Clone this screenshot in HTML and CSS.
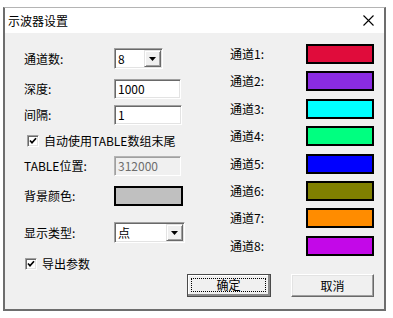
FILE: index.html
```html
<!doctype html>
<html lang="zh-CN">
<head>
    <meta charset="UTF-8">
    <meta name="viewport" content="width=device-width, initial-scale=1.0">
    <title>示波器设置</title>
    <link rel="stylesheet" href="styles.css">
</head>
<body>
    <div class="dialog">
        <!-- Title bar -->
        <div class="titlebar">
            <span class="title">示波器设置</span>
            <svg class="close" width="11" height="11" viewBox="0 0 11 11">
                <path d="M0.5 0.5 L10.5 10.5 M10.5 0.5 L0.5 10.5" stroke="#000" stroke-width="1.1" fill="none"/>
            </svg>
        </div>

        <div class="client">
            <!-- Left side: general settings -->
            <div class="left">
                <div class="row r1">
                    <span class="label">通道数:</span>
                    <div class="combo combo-small">
                        <span>8</span>
                        <span class="drop"><svg width="7" height="4" viewBox="0 0 7 4"><path d="M0 0 H7 L3.5 4 Z" fill="#000"/></svg></span>
                    </div>
                </div>
                <div class="row r2">
                    <span class="label">深度:</span>
                    <div class="input">1000</div>
                </div>
                <div class="row r3">
                    <span class="label">间隔:</span>
                    <div class="input input-wide">1</div>
                </div>
                <div class="row r4 check check-auto">
                    <span class="box"><svg width="8" height="8" viewBox="0 0 8 8"><path d="M1 3.5 L3 5.8 L7 1.2" stroke="#000" stroke-width="1.7" fill="none"/></svg></span>
                    <span>自动使用TABLE数组末尾</span>
                </div>
                <div class="row r5">
                    <span class="label">TABLE位置:</span>
                    <div class="input disabled">312000</div>
                </div>
                <div class="row r6">
                    <span class="label">背景颜色:</span>
                    <div class="swatch bg-swatch"></div>
                </div>
                <div class="row r7">
                    <span class="label">显示类型:</span>
                    <div class="combo combo-wide">
                        <span>点</span>
                        <span class="drop"><svg width="7" height="4" viewBox="0 0 7 4"><path d="M0 0 H7 L3.5 4 Z" fill="#000"/></svg></span>
                    </div>
                </div>
                <div class="row r8 check">
                    <span class="box"><svg width="8" height="8" viewBox="0 0 8 8"><path d="M1 3.5 L3 5.8 L7 1.2" stroke="#000" stroke-width="1.7" fill="none"/></svg></span>
                    <span>导出参数</span>
                </div>
            </div>

            <!-- Right side: channel colours and buttons -->
            <div class="right">
                <div class="channels">
                    <div class="channel"><span class="ch-label">通道1:</span><span class="swatch c1"></span></div>
                    <div class="channel"><span class="ch-label">通道2:</span><span class="swatch c2"></span></div>
                    <div class="channel"><span class="ch-label">通道3:</span><span class="swatch c3"></span></div>
                    <div class="channel"><span class="ch-label">通道4:</span><span class="swatch c4"></span></div>
                    <div class="channel"><span class="ch-label">通道5:</span><span class="swatch c5"></span></div>
                    <div class="channel"><span class="ch-label">通道6:</span><span class="swatch c6"></span></div>
                    <div class="channel"><span class="ch-label">通道7:</span><span class="swatch c7"></span></div>
                    <div class="channel"><span class="ch-label">通道8:</span><span class="swatch c8"></span></div>
                </div>
                <div class="buttons">
                    <button class="btn btn-default"><span class="focus">确定</span></button>
                    <button class="btn btn-cancel">取消</button>
                </div>
            </div>
        </div>
    </div>
</body>
</html>
```

FILE: styles.css
```css
* {
    margin: 0;
    padding: 0;
    box-sizing: border-box;
}

body {
    background-color: #fff;
    font-family: "Noto Sans CJK SC", sans-serif;
    font-size: 12px;
    line-height: 1;
    color: #000;
}

/* Window frame */
.dialog {
    width: 383px;
    height: 304px;
    margin: 7px 0 0 3px;
    border: 2px solid #6d6d6d;
    border-top: 1px solid #b4b4b4;
    box-shadow: 0 1px 0 #a8a8a8;
    background-color: #f0f0f0;
    display: flex;
    flex-direction: column;
}

.titlebar {
    height: 25px;
    background-color: #fff;
    display: flex;
    align-items: center;
    justify-content: space-between;
    padding: 0 10px 0 3px;
}

.close {
    display: block;
}

/* Client area */
.client {
    flex: 1;
    display: flex;
    justify-content: space-between;
    padding: 0 10px 0 19px;
}

.left {
    width: 162px;
    padding-top: 15px;
}

.row {
    display: flex;
    align-items: center;
}

.r2 { margin-top: 10px; }
.r3 { margin-top: 6px; }
.r4 { margin-top: 8px; height: 16px; }
.r5 { margin-top: 7px; }
.r6 { margin-top: 10px; }
.r7 { margin-top: 16px; }
.r8 { margin-top: 13px; height: 16px; }

.label {
    width: 90px;
}

/* Sunken edit fields */
.input,
.combo,
.box {
    background-color: #fff;
    border: 1px solid;
    border-color: #a0a0a0 #fff #fff #a0a0a0;
    box-shadow: inset 1px 1px 0 #696969, inset -1px -1px 0 #e3e3e3;
}

.input {
    width: 67px;
    height: 20px;
    padding-left: 3px;
    display: flex;
    align-items: center;
}

.input-wide {
    width: 68px;
}

.input.disabled {
    background-color: #f0f0f0;
    color: #6d6d6d;
    border-color: #b4b4b4 #fff #fff #b4b4b4;
    box-shadow: inset 1px 1px 0 #a0a0a0;
}

/* Combo boxes */
.combo {
    height: 21px;
    display: flex;
    align-items: center;
    justify-content: space-between;
    padding: 0 1px 0 3px;
}

.combo-small {
    width: 49px;
}

.combo-wide {
    width: 71px;
}

.drop {
    width: 17px;
    height: 17px;
    background-color: #f0f0f0;
    border: 1px solid;
    border-color: #e3e3e3 #696969 #696969 #e3e3e3;
    box-shadow: inset 1px 1px 0 #fff, inset -1px -1px 0 #a0a0a0;
    display: flex;
    align-items: center;
    justify-content: center;
}

.drop svg {
    display: block;
}

/* Check boxes */
.check {
    gap: 5px;
    padding-left: 1px;
}

.check-auto {
    padding-left: 3px;
}

.box {
    width: 12px;
    height: 12px;
    display: flex;
    align-items: center;
    justify-content: center;
}

.box svg {
    display: block;
}

/* Colour swatches */
.swatch {
    display: block;
    width: 68px;
    height: 20px;
    border: 2px solid #000;
}

.bg-swatch {
    width: 69px;
    background-color: #c0c0c0;
}

.c1 { background-color: #e00c3b; }
.c2 { background-color: #8a2be2; }
.c3 { background-color: #00ffff; }
.c4 { background-color: #00ff80; }
.c5 { background-color: #0000ff; }
.c6 { background-color: #808000; }
.c7 { background-color: #ff8c00; }
.c8 { background-color: #c308e8; }

/* Right column */
.right {
    padding-top: 11px;
    display: flex;
    flex-direction: column;
    align-items: flex-end;
}

.channels {
    display: flex;
    flex-direction: column;
    gap: 7.4px;
}

.channel {
    display: flex;
    align-items: center;
    height: 20px;
}

.ch-label {
    width: 76px;
}

/* Push buttons */
.buttons {
    display: flex;
    gap: 20px;
    margin-top: 18px;
}

.btn {
    width: 83px;
    height: 23px;
    font-family: inherit;
    font-size: 12px;
    color: #000;
    background-color: #f0f0f0;
    border: 1px solid;
    border-color: #fff #696969 #696969 #fff;
    box-shadow: inset -1px -1px 0 #a0a0a0, inset 1px 1px 0 #e3e3e3;
    display: flex;
    align-items: center;
    justify-content: center;
}

.btn-default {
    width: 84px;
    border: 1px solid #4a4a4a;
    box-shadow: inset -2px -2px 0 #8a8a8a, inset 1px 1px 0 #fff;
    padding: 3px 4px 4px 3px;
}

.focus {
    width: 100%;
    height: 100%;
    border: 1px dotted #000;
    display: flex;
    align-items: center;
    justify-content: center;
}
```
